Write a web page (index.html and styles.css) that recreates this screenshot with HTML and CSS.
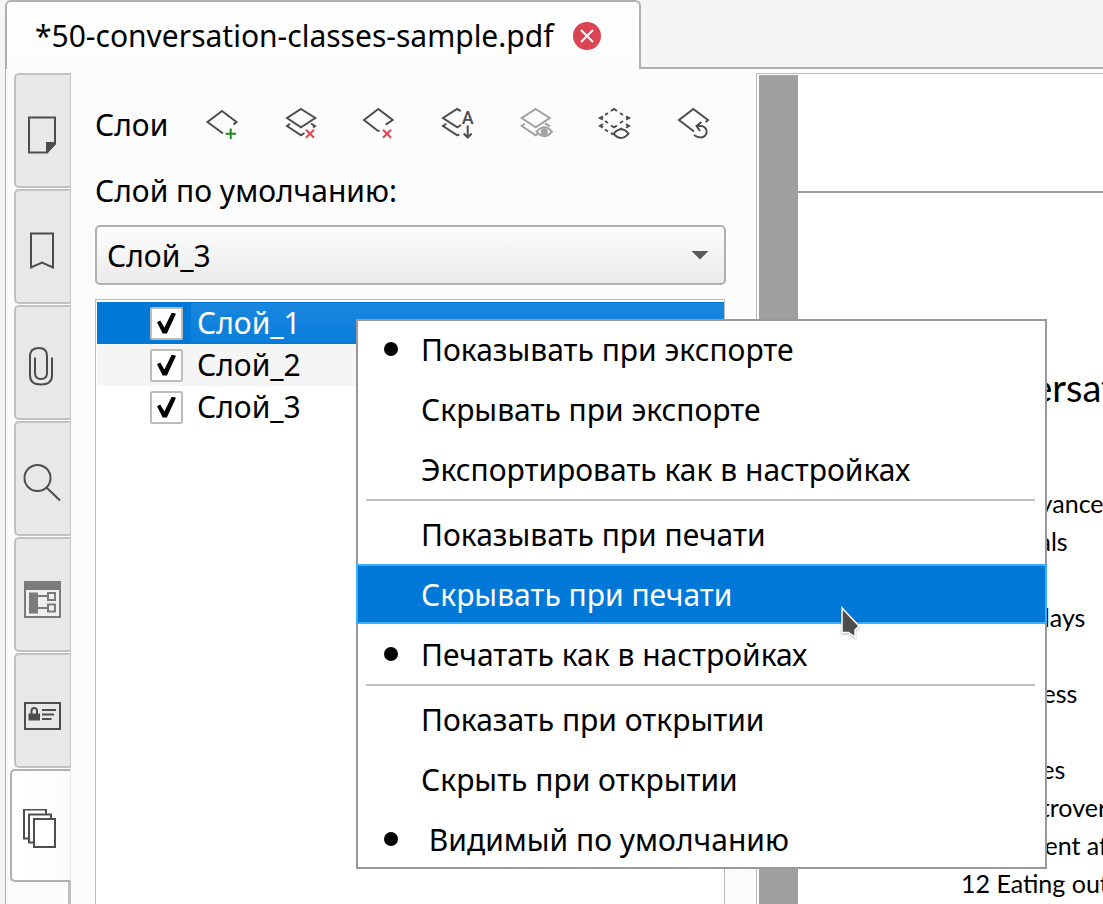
FILE: index.html
```html
<!DOCTYPE html>
<html lang="ru">
<head>
<meta charset="utf-8">
<meta name="viewport" content="width=device-width, initial-scale=1">
<title>50-conversation-classes-sample.pdf</title>
<link rel="stylesheet" href="styles.css">
</head>
<body>
<div class="app">
  <header class="tabbar">
    <div class="doc-tab">
      <span class="doc-name">*50-conversation-classes-sample.pdf</span>
      <button class="close" type="button" aria-label="Закрыть">
        <svg width="28" height="28" viewBox="0 0 28 28"><circle cx="14" cy="14" r="14" fill="#da4453"/><path d="M8 8l12 12M20 8L8 20" stroke="#fff" stroke-width="2"/></svg>
      </button>
    </div>
    <div class="tabbar-rest"></div>
  </header>

  <main class="workspace">
    <nav class="side" aria-label="Панели">
      <div class="side-tabs">
        <button class="side-tab" type="button" aria-label="Страницы">
          <svg width="38" height="40" viewBox="0 0 38 40"><path d="M6 2.500h26v26l-8 9H6z" fill="none" stroke="#4d4d4d" stroke-width="2"/><path d="M23 38V27h10v2l-9 9z" fill="#4d4d4d"/></svg>
        </button>
        <button class="side-tab" type="button" aria-label="Закладки">
          <svg width="38" height="40" viewBox="0 0 38 40"><path d="M8 2.500h22v34l-11-5-11 5z" fill="none" stroke="#4d4d4d" stroke-width="2"/></svg>
        </button>
        <button class="side-tab" type="button" aria-label="Вложения">
          <svg width="38" height="40" viewBox="0 0 38 40"><path d="M29 10.500v18c0 6-4 9-11 9s-11-3-11-9V9c0-5 3-8 9-8s8 3 8 8v17c0 4-2 6-6 6s-6-2-6-6V10.500" fill="none" stroke="#4d4d4d" stroke-width="2"/></svg>
        </button>
        <button class="side-tab" type="button" aria-label="Поиск">
          <svg width="38" height="40" viewBox="0 0 38 40"><circle cx="14.500" cy="15" r="13" fill="none" stroke="#4d4d4d" stroke-width="2"/><path d="M23.500 24.500L37 37.500" stroke="#4d4d4d" stroke-width="2"/></svg>
        </button>
        <button class="side-tab" type="button" aria-label="Формы">
          <svg width="38" height="40" viewBox="0 0 38 40"><path d="M1 2h37v37H1z" fill="#7b7b7b"/><path d="M3 11h33v26H3z" fill="#efefef"/><path d="M6 13.500h9v21H6z" fill="#7b7b7b"/><path d="M15 17h10M15 29h10M25 14h7v7h-7zM25 25.500h7v7h-7z" fill="none" stroke="#7b7b7b" stroke-width="2"/></svg>
        </button>
        <button class="side-tab" type="button" aria-label="Подписи">
          <svg width="38" height="40" viewBox="0 0 38 40"><path d="M2 8h35v26H2z" fill="none" stroke="#4d4d4d" stroke-width="2"/><path d="M5.500 18.500h11.500v7H5.500z" fill="#4d4d4d"/><path d="M8.500 19v-3c0-4 5.500-4 5.500 0v3M19 15h14M19 19.500h12M19 24h9.500" fill="none" stroke="#4d4d4d" stroke-width="2"/></svg>
        </button>
        <button class="side-tab side-tab-active" type="button" aria-label="Слои" aria-pressed="true">
          <svg width="38" height="40" viewBox="0 0 38 40"><g fill="#fff" stroke="#4d4d4d" stroke-width="2"><path d="M4 0.500h22v29H4z"/><path d="M9 5.500h22v28H9z"/><path d="M14 10h21v28H14z"/></g></svg>
        </button>
      </div>
      <div class="side-rest"></div>
    </nav>

    <section class="panel">
      <div class="panel-head">
        <h1 class="panel-title">Слои</h1>
        <div class="tools">
          <button class="tool" type="button" aria-label="Добавить слой">
            <svg viewBox="0 0 32 32"><path d="M27.500 17.500l3-2.500L16 4 1.500 15 17 26.500"/><path class="green" d="M24.700 21.500v10.500M19.500 26.700H30"/></svg>
          </button>
          <button class="tool" type="button" aria-label="Удалить все слои">
            <svg viewBox="0 0 32 32"><path d="M16 2l14.300 9L16 20.300 2 11zM5 16.700L2 19l14 9.300 3.500-2.300M26 16.500l4 2.500-2 1.500"/><path class="red" d="M21 22.700l8 8M29 22.700l-8 8"/></svg>
          </button>
          <button class="tool" type="button" aria-label="Удалить слой">
            <svg viewBox="0 0 32 32"><path d="M22.700 17.700l7-4.700L15.300 2 1 13l14 11 1.500-.5"/><path class="red" d="M20 22.700l8 8M28 22.700l-8 8"/></svg>
          </button>
          <button class="tool" type="button" aria-label="Сортировать">
            <svg viewBox="0 0 32 32"><path d="M18.700 4L15 2 1 11l14.300 9.300L19 18M4.300 16.700L1 19l14.300 9.300 2-1M25.700 18.500v12M21.700 26.500l4 4 4-4"/><text class="letter" x="25.700" y="16.500">A</text></svg>
          </button>
          <button class="tool tool-off" type="button" disabled aria-label="Показать все">
            <svg viewBox="0 0 32 32"><path d="M14.700 2l14 9-14 9.300L.7 11zM3.700 16.700L.7 19l14 9.300 2-1.300M24 16.300l5 3M15.500 24.700q8-9 15.500 0-7.500 9-15.500 0z"/><circle class="dot" cx="23.300" cy="24.700" r="3.500"/></svg>
          </button>
          <button class="tool" type="button" aria-label="Скрыть все">
            <svg viewBox="0 0 32 32"><path d="M12 4l3-2 3 2M21 6l3 2M27 9.500l3 1.500-3 1.500M24 14l-3 2M18 18.500l-3 1.800-3-1.800M9 16l-3-2M4 12.500L1 11l3-1.500M6 8l3-2M4 17l-3 2 3 1.500M6 22.500l3 2M12 26l2 1.500M27 17l3 2-3 1.500M21 22.300l2-1.300M14.500 26.700q8-9 15 0-7 8.500-15 0z"/></svg>
          </button>
          <button class="tool" type="button" aria-label="Сбросить">
            <svg viewBox="0 0 32 32"><path d="M27.700 15l2.300-2L15.300 2 1 13l15 11.500M23.500 15l-5 4 3.500 5M18.500 19h4.500a5.700 5.700 0 0 1 0 11.400q-4 0-7-2.400"/></svg>
          </button>
        </div>
      </div>

      <label class="combo-label" for="default-layer">Слой по умолчанию:</label>
      <div class="combo">
        <select class="combo-select" id="default-layer">
          <option>Слой_1</option>
          <option>Слой_2</option>
          <option selected>Слой_3</option>
        </select>
      </div>

      <ul class="layers">
        <li class="layer layer-selected"><input class="check" type="checkbox" id="layer1" checked><label class="layer-name" for="layer1">Слой_1</label></li>
        <li class="layer layer-alt"><input class="check" type="checkbox" id="layer2" checked><label class="layer-name" for="layer2">Слой_2</label></li>
        <li class="layer"><input class="check" type="checkbox" id="layer3" checked><label class="layer-name" for="layer3">Слой_3</label></li>
      </ul>
    </section>

    <section class="viewer">
      <article class="page">
        <div class="page-header"></div>
        <h2 class="page-title">50 Conversation Classes</h2>
        <ul class="contents">
          <li>2 Annoyances</li>
          <li>3 Animals</li>
          <li>4 Art</li>
          <li>5 Birthdays</li>
          <li>6 Film</li>
          <li>7 Business</li>
          <li>8 Cars</li>
          <li>9 Clothes</li>
          <li>10 Controversial opinions</li>
          <li>11 Current affairs</li>
          <li>12 Eating out</li>
        </ul>
      </article>
    </section>
  </main>

  <div class="menu" role="menu">
    <button class="item item-on" type="button" role="menuitemradio" aria-checked="true">Показывать при экспорте</button>
    <button class="item" type="button" role="menuitemradio" aria-checked="false">Скрывать при экспорте</button>
    <button class="item" type="button" role="menuitemradio" aria-checked="false">Экспортировать как в настройках</button>
    <hr class="sep">
    <button class="item" type="button" role="menuitemradio" aria-checked="false">Показывать при печати</button>
    <button class="item item-hover" type="button" role="menuitemradio" aria-checked="false">Скрывать при печати</button>
    <button class="item item-on" type="button" role="menuitemradio" aria-checked="true">Печатать как в настройках</button>
    <hr class="sep">
    <button class="item" type="button" role="menuitemradio" aria-checked="false">Показать при открытии</button>
    <button class="item" type="button" role="menuitemradio" aria-checked="false">Скрыть при открытии</button>
    <button class="item item-on" type="button" role="menuitemradio" aria-checked="true"> Видимый по умолчанию</button>
  </div>

  <svg class="cursor" width="24" height="36" viewBox="0 0 24 36"><path d="M2 2v24.500h6.500l6.500 4.500v-7l4-4z" fill="#4d4d4d" stroke="#fff" stroke-width="1.500"/></svg>
</div>
</body>
</html>
```
FILE: styles.css
```css
* {
  box-sizing: border-box;
}

body {
  margin: 0;
  background: #f5f5f5;
  color: #000;
  font-family: "Noto Sans", "Open Sans", sans-serif;
  font-size: 30px;
  line-height: 40px;
}

button {
  padding: 0;
  border: 0;
  background: none;
  color: inherit;
  font: inherit;
}

svg {
  display: block;
}

.app {
  position: relative;
  display: flex;
  flex-direction: column;
  height: 100vh;
  padding-left: 5px;
  overflow: hidden;
}

/* Document tabs */
.tabbar {
  display: flex;
  flex: none;
  height: 69px;
}

.doc-tab {
  display: flex;
  align-items: center;
  gap: 19px;
  padding: 0 38px 0 28px;
  border: 2px solid #b0b0b0;
  border-bottom: 0;
  border-radius: 6px 6px 0 0;
  background: linear-gradient(#fff, #fcfcfc);
  white-space: nowrap;
}

.tabbar-rest {
  flex: 1;
  border-bottom: 2px solid #b0b0b0;
}

.workspace {
  display: grid;
  grid-template-columns: 65px 685px minmax(0, 1fr);
  flex: 1;
  min-height: 0;
  padding-top: 4px;
  border-left: 1px solid #b0b0b0;
  background: #fcfcfc;
}

/* Vertical tabs */
.side {
  display: flex;
  flex-direction: column;
  min-height: 0;
}

.side-tabs {
  display: flex;
  flex: none;
  flex-direction: column;
  gap: 1px;
  height: 809px;
}

.side-tab {
  display: flex;
  flex: 1;
  align-items: center;
  justify-content: center;
  margin-left: 8px;
  padding: 8px 3px 0 0;
  border: 2px solid #c1c1c1;
  border-right: 1px solid #c8c8c8;
  border-radius: 5px 0 0 5px;
  background: #e8e8e8;
}

.side-tab-active {
  margin-left: 4px;
  padding: 6px 4px 0 0;
  border-color: #b0b0b0;
  border-right-color: #eaeaea;
  background: linear-gradient(90deg, #fff, #fcfcfc);
}

.side-rest {
  flex: 1;
  border-right: 3px solid #bfbfbf;
}

/* Layers panel */
.panel {
  display: flex;
  flex-direction: column;
  min-height: 0;
  padding: 32px 30px 0 24px;
}

.panel-head {
  display: flex;
  align-items: center;
  gap: 38px;
}

.panel-title {
  margin: 0;
  font-size: 30px;
  font-weight: 400;
}

.tools {
  display: flex;
  flex: 1;
  justify-content: space-between;
  padding: 0 16px 4px 0;
}

.tool {
  width: 32px;
  height: 32px;
}

.tool svg {
  width: 32px;
  height: 32px;
  overflow: visible;
  fill: none;
  stroke: #4d4d4d;
  stroke-width: 2;
}

.tool-off svg {
  stroke: #a0a0a0;
}

.tool .green {
  stroke: #218a21;
}

.tool .red {
  stroke: #da4453;
}

.tool .dot {
  fill: #a0a0a0;
  stroke: none;
}

.tool .letter {
  fill: #4d4d4d;
  stroke: none;
  font-family: Roboto, sans-serif;
  font-size: 18px;
  font-weight: 500;
  text-anchor: middle;
}

.combo-label {
  margin: 26px 0 14px;
}

.combo {
  display: grid;
  flex: none;
  align-items: center;
}

.combo-select {
  grid-area: 1 / 1;
  width: 100%;
  height: 60px;
  padding: 2px 10px 0;
  border: 2px solid #b0b0b0;
  border-radius: 5px;
  appearance: none;
  background: linear-gradient(#fdfdfd, #ebebeb);
  color: #000;
  font: inherit;
}

.combo::after {
  content: "";
  grid-area: 1 / 1;
  justify-self: end;
  width: 18px;
  height: 9px;
  margin-right: 17px;
  background: #5a5a5a;
  clip-path: polygon(0 0, 100% 0, 50% 100%);
  pointer-events: none;
}

.layers {
  flex: 1;
  min-height: 0;
  margin: 14px 1px 0 0;
  padding: 2px 0 0 1px;
  border: 1px solid #bcbcbc;
  border-bottom: 0;
  background: #fff;
  list-style: none;
}

.layer {
  display: flex;
  align-items: center;
  gap: 8px;
  height: 42px;
  padding-left: 53px;
}

.layer-alt {
  background: #f5f5f5;
}

.layer-selected {
  background: #0078d7;
  color: #fff;
}

.layer-name {
  flex: 1;
  padding-left: 6px;
}

.layer-selected .layer-name {
  background: linear-gradient(#1b87df, #077ddb);
}

.check {
  display: grid;
  place-items: center;
  width: 33px;
  height: 33px;
  margin: 0;
  border: 2px solid #bcbcbc;
  border-radius: 2px;
  appearance: none;
  background: #fff;
}

.check:checked::before {
  content: "";
  width: 19px;
  height: 21px;
  background: #000;
  clip-path: polygon(0 46%, 17% 38%, 39% 72%, 78% 0, 100% 6%, 52% 100%, 30% 100%);
}

/* Document view */
.viewer {
  min-width: 0;
  min-height: 0;
  padding: 1px 0 0 2px;
  overflow: hidden;
  border-top: 1px solid #bcbcbc;
  border-left: 1px solid #bcbcbc;
}

.page {
  height: 100%;
  border-left: 39px solid #9f9f9f;
  background: #fff;
  font-family: Lato, sans-serif;
  white-space: nowrap;
}

.page-header {
  height: 118px;
  border-bottom: 2px solid #9f9f9f;
}

.page-title {
  margin: 170px 0 0;
  padding-left: 94px;
  font-size: 38px;
  font-weight: 400;
  line-height: 48px;
}

.contents {
  margin: 73px 0 0;
  padding-left: 163px;
  font-size: 25px;
  line-height: 38px;
  list-style: none;
}

/* Context menu */
.menu {
  position: absolute;
  top: 319px;
  left: 356px;
  display: flex;
  flex-direction: column;
  width: 691px;
  background: #fff;
  box-shadow: inset 0 0 0 2px #999;
}

.item {
  display: grid;
  grid-template-columns: 65px 1fr;
  align-items: center;
  height: 60px;
  padding-top: 2px;
  text-align: left;
  white-space: pre;
}

.item::before {
  content: "";
  width: 14px;
  height: 14px;
  margin: 0 0 2px 28px;
  border-radius: 50%;
}

.item-on::before {
  background: #000;
}

.item-hover {
  background: #0078d7;
  box-shadow: inset 0 0 0 2px #3daeff;
  color: #fff;
}

.sep {
  width: auto;
  height: 2px;
  margin: 0 12px 3px 10px;
  border: 0;
  background: #c0c0c0;
}

.cursor {
  position: absolute;
  top: 606px;
  left: 840px;
  filter: drop-shadow(0 1px 1px rgba(0, 0, 0, 0.3));
}
```
